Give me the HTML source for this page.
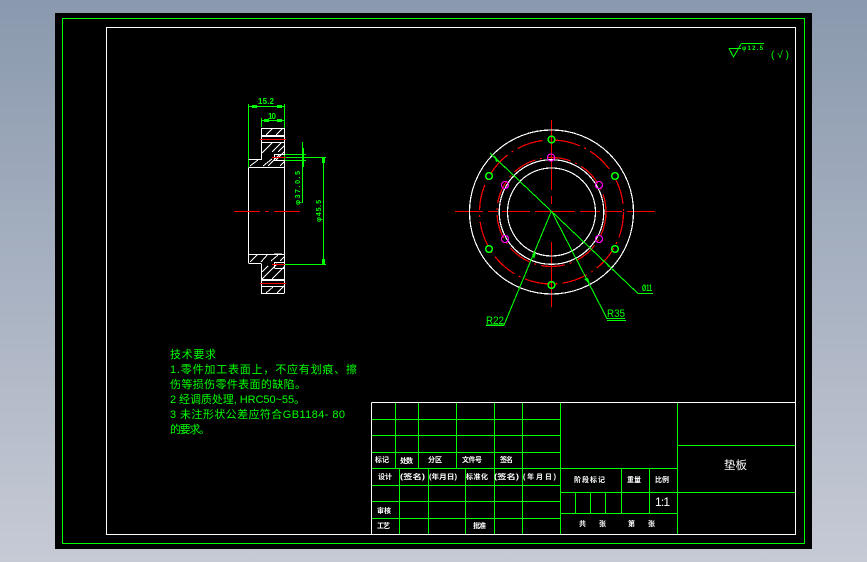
<!DOCTYPE html>
<html><head><meta charset="utf-8"><style>
html,body{margin:0;padding:0;width:867px;height:562px;overflow:hidden;background:linear-gradient(180deg,#8a99ae 0%,#c6cad5 100%)}
svg{position:absolute;left:0;top:0}
text{font-family:"Liberation Sans","Noto Sans CJK SC","WenQuanYi Zen Hei",sans-serif}
.w{fill:#fff;font-size:7px;font-weight:bold}
.g{fill:#0f0;font-size:11px}
.d{fill:#0f0;font-size:7px;font-weight:bold}
</style></head><body>
<svg width="867" height="562" viewBox="0 0 867 562" xmlns="http://www.w3.org/2000/svg">
<rect x="55" y="13" width="757" height="536" fill="#000"/>
<g fill="none" shape-rendering="crispEdges">
<rect x="62.5" y="18.5" width="742" height="525" stroke="#0f0"/>
<rect x="106.5" y="27.5" width="689" height="507" stroke="#fff"/>
<path stroke="#fff" d="M371.5 402.5H795.5M371.5 402.5V534"/>
<path stroke="#0f0" d="M372 419.5H560M372 435.5H560M372 452.5H560M372 468.5H677M372 485.5H560M372 501.5H560M372 518.5H560M678 445.5H795M561 492.5H795M561 513.5H677
M395.5 403V468M418.5 403V468M456.5 403V468M494.5 403V534M522.5 403V534M560.5 403V534M677.5 403V534
M399.5 469V534M428.5 469V534M465.5 469V534
M621.5 469V513M649.5 469V513M575.5 493V513M590.5 493V513M605.5 493V513"/>
<!-- left view: dims -->
<path stroke="#0f0" d="M248.5 104V211M284.5 104V211M249 106.5H284M261.5 118V127M262 120.5H284M302.5 142V203M284 154.5H306M284 160.5H306M284 157.5H326M323.5 158V264M285 264.5H326"/>
<path fill="#0f0" d="M252 105h5v3h-5zM277 105h5v3h-5zM264 119h5v3h-5zM277 119h5v3h-5zM302 148h2v19h-2zM322 157h3v6h-3zM322 259h3v5h-3z"/>
<!-- left view: outline -->
<path stroke="#fff" d="M261.5 128.5H284.5V154.5H274.5V160.5H284.5V167.5H248.5M261.5 128V159M248.5 159.5H262M261.5 135.5H284.5M261.5 136.5H284.5M261.5 142.5H284.5M248.5 168V263M284.5 168V293M248.5 254.5H284.5M248.5 263.5H261.5M261.5 264V293.5H284.5M274.5 262.5H284.5M274.5 268.5H284.5M274.5 262V268M261.5 279.5H284.5M261.5 280.5H284.5M261.5 286.5H284.5"/>
</g>
<g fill="none" stroke="#fff" stroke-width="1" shape-rendering="crispEdges">
<path d="M266 135L272 129M276 135L282 129M262 153L272 143M268 166L279 155M263 166L272 159M276 160L284 152M250 166L258 160M280 166L284 162M272 152L281 143M278 152L284 146"/>
<path d="M250 262L257 255M268 254L261 262M274 254L282 254M262 279L277 264M272 279L284 267M262 272L268 266M271 261L278 255M280 261L284 257M266 293L273 287M277 293L284 286"/>
</g>
<g fill="none" stroke="#f00" shape-rendering="crispEdges">
<path d="M260 139.5H286M272 157.5H286M272 264.5H285M260 283.5H286M234 211.5H260M265 211.5H269M274 211.5H300"/>
<path d="M455 211.5H483M488 211.5H498M502 211.5H530M535 211.5H575M580 211.5H600M604 211.5H622M627 211.5H655M551.5 120V190M551.5 196V204M551.5 242V307"/>
</g>
<!-- right view -->
<g fill="none" shape-rendering="crispEdges">
<circle cx="551.5" cy="212" r="82" stroke="#fff" stroke-width="1.2"/>
<circle cx="551.5" cy="212" r="52.3" stroke="#fff" stroke-width="1.2"/>
<circle cx="551.5" cy="212" r="44" stroke="#fff" stroke-width="1.2"/>
<circle cx="551.5" cy="212" r="72" stroke="#f00" stroke-width="1.2" stroke-dasharray="26 5 2 5"/>
<circle cx="551.5" cy="212" r="54.5" stroke="#f00" stroke-width="1.2" stroke-dasharray="24 5 2 5"/>
<g stroke="#f0f" stroke-width="1.2">
<circle cx="551" cy="157.5" r="3.5"/><circle cx="505" cy="185" r="3.5"/><circle cx="599" cy="185" r="3.5"/><circle cx="505" cy="239" r="3.5"/><circle cx="599" cy="239" r="3.5"/>
</g>
<g stroke="#0f0" stroke-width="1.6">
<circle cx="551.5" cy="139.5" r="3.3"/><circle cx="551.5" cy="285" r="3.3"/><circle cx="489" cy="176" r="3.3"/><circle cx="615" cy="176" r="3.3"/><circle cx="489" cy="249" r="3.3"/><circle cx="615" cy="249" r="3.3"/>
</g>
<path stroke="#0f0" stroke-width="1.1" d="M490 153L638 293.5H653M551.5 211L504 325H486M551.5 211L607 318.5H625"/>
</g>
<path fill="#0f0" d="M494 155l5 6-3 1zM532 254l4-1-2 6zM584 279l4-1 2 6zM606 262l4 4-2 1zM607 320h19v1h-19zM486 325h18v1h-18z"/>
<text x="486" y="324" class="g" style="font-size:11px" textLength="18" lengthAdjust="spacingAndGlyphs">R22</text>
<text x="607" y="317" class="g" style="font-size:11px" textLength="18" lengthAdjust="spacingAndGlyphs">R35</text>
<text x="642" y="291" class="g" style="font-size:9px;font-weight:bold" textLength="10" lengthAdjust="spacingAndGlyphs">Ø11</text>
<!-- dim text -->
<text x="258" y="104" class="d" style="font-size:8px" textLength="16">15.2</text>
<text x="268" y="119" class="d" style="font-size:8px" textLength="8">10</text>
<text class="d" transform="translate(300 205) rotate(-90)" textLength="34">φ37.0.5</text>
<text class="d" transform="translate(321 222) rotate(-90)" textLength="22">φ45.5</text>
<!-- tech text -->
<text x="170" y="358" class="g" textLength="46">技术要求</text>
<text x="170" y="373" class="g" textLength="187">1.零件加工表面上，不应有划痕、擦</text>
<text x="170" y="388" class="g" textLength="136">伤等损伤零件表面的缺陷。</text>
<text x="170" y="403" class="g" textLength="135">2 经调质处理, HRC50~55。</text>
<text x="170" y="418" class="g" textLength="175">3 未注形状公差应符合GB1184- 80</text>
<text x="170" y="433" class="g" textLength="40">的要求。</text>
<!-- title block text -->
<text x="375" y="462" class="w" textLength="14">标记</text>
<text x="400" y="463" class="w" textLength="13">处数</text>
<text x="428" y="462" class="w" textLength="14">分区</text>
<text x="462" y="462" class="w" textLength="20">文件号</text>
<text x="500" y="462" class="w" textLength="13">签名</text>
<text x="378" y="479" class="w" textLength="14">设计</text>
<text x="400" y="479" class="w" textLength="25" lengthAdjust="spacingAndGlyphs">(签名)</text>
<text x="429" y="479" class="w" textLength="28" lengthAdjust="spacingAndGlyphs">(年月日)</text>
<text x="466" y="479" class="w" textLength="22">标准化</text>
<text x="494" y="479" class="w" textLength="25" lengthAdjust="spacingAndGlyphs">(签名)</text>
<text x="523" y="479" class="w" textLength="33">(年月日)</text>
<text x="377" y="513" class="w" textLength="14">审核</text>
<text x="377" y="528" class="w" textLength="13">工艺</text>
<text x="473" y="528" class="w" textLength="13">批准</text>
<text x="574" y="482" class="w" textLength="31">阶段标记</text>
<text x="627" y="482" class="w" textLength="14">重量</text>
<text x="655" y="482" class="w" textLength="14">比例</text>
<text x="655" y="506" class="w" style="font-size:12px;font-weight:normal" textLength="15">1:1</text>
<text x="579" y="526" class="w" textLength="8">共</text>
<text x="599" y="526" class="w" textLength="8">张</text>
<text x="628" y="526" class="w" textLength="8">第</text>
<text x="648" y="526" class="w" textLength="8">张</text>
<text x="724" y="469" class="w" style="font-size:11.5px;font-weight:normal" textLength="23">垫板</text>
<!-- roughness -->
<path fill="none" stroke="#0f0" shape-rendering="crispEdges" d="M729 48.5H741M729 48.5L733.5 57L741 44L742 43.5H764"/>
<text x="742" y="50" class="d" style="font-size:6px" textLength="21">φ12.5</text>
<text x="771" y="58" class="g" style="font-size:10px" textLength="18">(√)</text>
</svg>
</body></html>
